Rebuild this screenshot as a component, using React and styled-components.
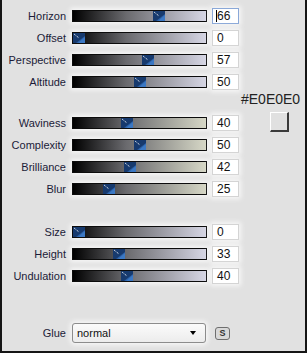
import React from 'react'
import styled, { createGlobalStyle } from 'styled-components'

const GlobalStyle = createGlobalStyle`
  body {
    margin: 0;
    background: #e1e1e1;
    font-family: 'Liberation Sans', Arial, sans-serif;
  }
`

const Panel = styled.div`
  box-sizing: border-box;
  width: 307px;
  height: 353px;
  background: #e1e1e1;
  border: 2px solid #151515;
  border-top: none;
  display: flex;
`
const Sliders = styled.div`
  display: flex;
  flex-direction: column;
  padding-top: 5px;
`
const Group = styled.div`
  display: flex;
  flex-direction: column;
  margin-top: ${(p) => p.$gap || 0}px;
`
const Row = styled.div`
  display: flex;
  align-items: center;
  height: 22px;
`
const Label = styled.div`
  width: 64px;
  margin-right: 6px;
  text-align: right;
  font-size: 11px;
  color: #1b1b38;
`
const Track = styled.div`
  position: relative;
  box-sizing: border-box;
  width: 135px;
  height: 12px;
  margin-right: 5px;
  border: 1px solid #0c0c0c;
  background: linear-gradient(to right, #000 0%, #6a6a6e 40%, ${(p) => p.$end} 100%);
  box-shadow: 0 0 5px 2px rgba(255, 255, 255, 0.75);
`
const Thumb = styled.svg`
  position: absolute;
  top: 0;
  width: 12px;
  height: 10px;
  display: block;
`
const ValueBox = styled.div`
  position: relative;
  box-sizing: border-box;
  width: 27px;
  height: 16px;
  padding-left: 4px;
  background: #fff;
  border: 1px solid ${(p) => (p.$focused ? '#8aa8d8' : '#d4d4d4')};
  font-family: 'Liberation Sans Narrow', 'Liberation Sans', Arial, sans-serif;
  font-size: 12px;
  line-height: 14px;
  color: #111;
  box-shadow: 0 0 5px 2px rgba(255, 255, 255, 0.75);
`
const Caret = styled.span`
  position: absolute;
  left: 3px;
  top: 1px;
  width: 1px;
  height: 12px;
  background: #000;
`
const Side = styled.div`
  display: flex;
  flex-direction: column;
  padding-top: 91px;
  padding-left: 2px;
`
const ColorName = styled.div`
  font-size: 14px;
  line-height: 16px;
  color: #222;
`
const Swatch = styled.div`
  box-sizing: border-box;
  width: 19px;
  height: 20px;
  margin-top: 5px;
  margin-left: 29px;
  background: #e0e0e0;
  border-top: 1px solid #fff;
  border-left: 1px solid #fff;
  border-right: 2px solid #3a3a3a;
  border-bottom: 2px solid #3a3a3a;
`
const Select = styled.div`
  box-sizing: border-box;
  width: 134px;
  height: 20px;
  margin-right: 9px;
  display: flex;
  align-items: center;
  justify-content: space-between;
  padding: 0 9px 0 4px;
  border: 1px solid #8c8c8c;
  border-radius: 3px;
  background: linear-gradient(#fbfbfb, #ececec);
  font-size: 11px;
  color: #111;
  box-shadow: 0 0 5px 2px rgba(255, 255, 255, 0.75);
`
const Arrow = styled.span`
  width: 0;
  height: 0;
  border-left: 3.5px solid transparent;
  border-right: 3.5px solid transparent;
  border-top: 4px solid #000;
`
const SmallButton = styled.div`
  box-sizing: border-box;
  width: 15px;
  height: 13px;
  border: 1px solid #6e6e6e;
  border-radius: 3px;
  background: #d8d8d8;
  display: flex;
  align-items: center;
  justify-content: center;
  font-size: 9px;
  font-weight: bold;
  color: #333;
`

const groups = [
  {
    gap: 0,
    end: '#d6d6e4',
    rows: [
      ['Horizon', 66, true],
      ['Offset', 0],
      ['Perspective', 57],
      ['Altitude', 50],
    ],
  },
  {
    gap: 19,
    end: '#d6d7c6',
    rows: [
      ['Waviness', 40],
      ['Complexity', 50],
      ['Brilliance', 42],
      ['Blur', 25],
    ],
  },
  {
    gap: 21,
    end: '#d6d6e4',
    rows: [
      ['Size', 0],
      ['Height', 33],
      ['Undulation', 40],
    ],
  },
]

function ThumbIcon({ value }) {
  return (
    <Thumb viewBox="0 0 12 10" style={{ left: (value / 100) * 121 }}>
      <rect width="12" height="10" fill="#2d61a6" />
      <polygon points="0,0 12,0 12,3 3,10 0,10" fill="#173a6e" />
      <polygon points="12,4 12,10 5,10" fill="#3b78c4" />
      <line x1="1" y1="1" x2="6" y2="5" stroke="#fff" strokeWidth="1" strokeDasharray="1 1" />
    </Thumb>
  )
}

export default function App() {
  return (
    <>
      <GlobalStyle />
      <Panel>
        <Sliders>
          {groups.map((g, gi) => (
            <Group key={gi} $gap={g.gap}>
              {g.rows.map(([name, value, focused]) => (
                <Row key={name}>
                  <Label>{name}</Label>
                  <Track $end={g.end}>
                    <ThumbIcon value={value} />
                  </Track>
                  <ValueBox $focused={focused}>
                    {focused && <Caret />}
                    {value}
                  </ValueBox>
                </Row>
              ))}
            </Group>
          ))}
          <Group $gap={35}>
            <Row>
              <Label>Glue</Label>
              <Select>
                normal
                <Arrow />
              </Select>
              <SmallButton>S</SmallButton>
            </Row>
          </Group>
        </Sliders>
        <Side>
          <ColorName>#E0E0E0</ColorName>
          <Swatch />
        </Side>
      </Panel>
    </>
  )
}
